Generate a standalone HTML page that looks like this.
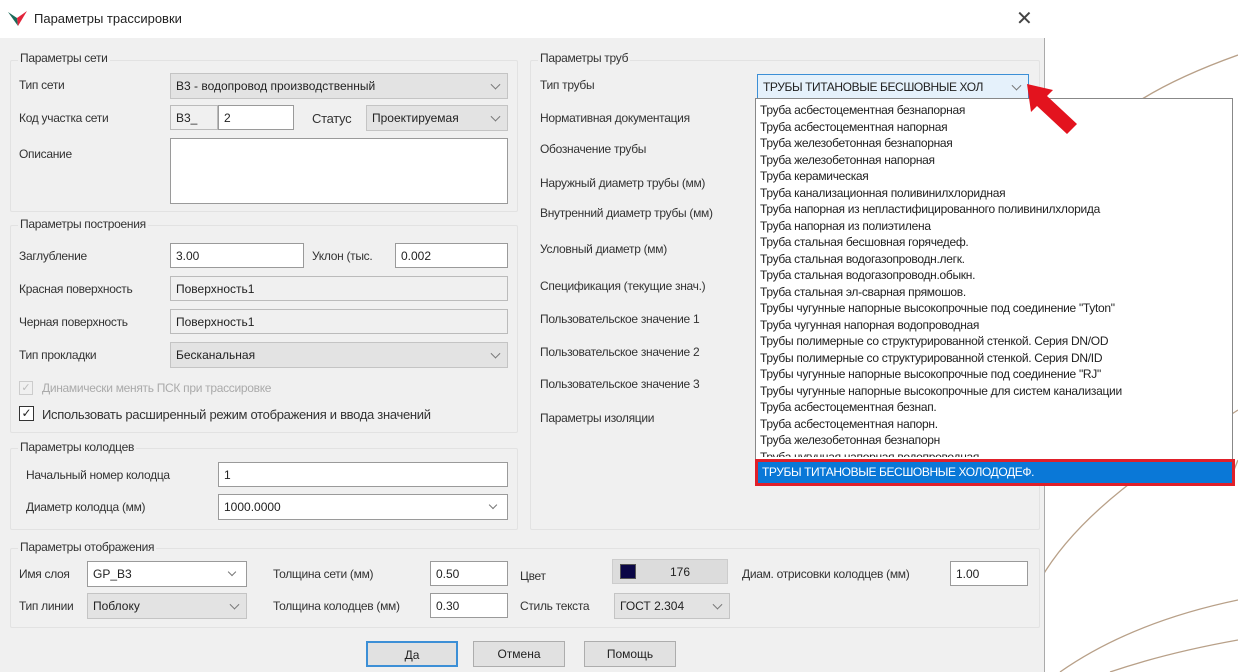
<!DOCTYPE html><html><head><meta charset="utf-8"><style>
*{box-sizing:border-box;margin:0;padding:0}
body{width:1238px;height:672px;overflow:hidden;background:#fff;font-family:"Liberation Sans","DejaVu Sans",sans-serif;font-size:12px;color:#222;position:relative}
.a{position:absolute;white-space:nowrap}
.dlg{position:absolute;left:0;top:0;width:1045px;height:672px;background:#f0f0f0;border-right:1px solid #aaa}
.title{position:absolute;left:0;top:0;width:1045px;height:38px;background:#fff}
.grp{position:absolute;border:1px solid #e2e2e2;border-radius:2px}
.lb{position:absolute;white-space:nowrap;font-size:12px;letter-spacing:-0.3px;color:#333}
.in{position:absolute;background:#fff;border:1px solid #9a9a9a;padding:0 5px;font-size:12px;white-space:nowrap;overflow:hidden;display:flex;align-items:center}
.ro{background:#f0f0f0;border-color:#bbb}
.cb{position:absolute;background:#e3e3e3;border:1px solid #c4c4c4;padding:0 5px;font-size:12px;white-space:nowrap;overflow:hidden;display:flex;align-items:center}
.cb:after{content:"";position:absolute;right:8px;top:50%;width:6px;height:6px;border-right:1px solid #777;border-bottom:1px solid #777;transform:translateY(-70%) rotate(45deg)}
.btn{position:absolute;background:#e1e1e1;border:1px solid #adadad;text-align:center;font-size:12px;line-height:24px}
.li{height:16.5px;line-height:16.5px;padding-left:4px;font-size:12px;letter-spacing:-0.3px;color:#222;white-space:nowrap}
</style></head><body>
<svg class="a" style="left:1040px;top:40px" width="198" height="632"><g fill="none" stroke="#b8a088" stroke-width="1.3">
<path d="M20 160 C40 90 100 50 198 15"/>
<path d="M0 540 C40 470 120 420 198 370"/>
<path d="M20 632 C80 590 150 570 198 560"/>
<path d="M70 632 C120 615 170 605 198 600"/>
<path d="M190 440 L198 420"/></g></svg>
<div class="dlg"></div>
<div class="title"></div>
<svg class="a" style="left:8px;top:10px" width="20" height="18"><path d="M0 2 L10 16 L9 8 Z" fill="#1b6b5a"/><path d="M9 8 L10 16 L19 1 Z" fill="#e2243a"/></svg>
<div class="a" style="left:34px;top:11px;font-size:13px;color:#222">Параметры трассировки</div>
<div class="a" style="left:1016px;top:6px;font-size:20px;color:#444">✕</div>

<div class="grp" style="left:10px;top:60px;width:508px;height:152px"></div>
<div class="lb" style="left:18px;top:51px;background:#f0f0f0;padding:0 2px">Параметры сети</div>
<div class="lb" style="left:19px;top:78px">Тип сети</div>
<div class="cb" style="left:170px;top:73px;width:338px;height:26px">В3 - водопровод производственный</div>
<div class="lb" style="left:19px;top:111px">Код участка сети</div>
<div class="in ro" style="left:170px;top:105px;width:48px;height:25px">В3_</div>
<div class="in" style="left:218px;top:105px;width:76px;height:25px">2</div>
<div class="lb" style="left:312px;top:111px;font-size:13px">Статус</div>
<div class="cb" style="left:366px;top:105px;width:142px;height:26px">Проектируемая</div>
<div class="lb" style="left:19px;top:147px">Описание</div>
<div class="in" style="left:170px;top:138px;width:338px;height:66px"></div>

<div class="grp" style="left:10px;top:225px;width:508px;height:208px"></div>
<div class="lb" style="left:18px;top:217px;background:#f0f0f0;padding:0 2px">Параметры построения</div>
<div class="lb" style="left:19px;top:249px">Заглубление</div>
<div class="in" style="left:170px;top:243px;width:134px;height:25px">3.00</div>
<div class="lb" style="left:312px;top:249px">Уклон (тыс.</div>
<div class="in" style="left:395px;top:243px;width:113px;height:25px">0.002</div>
<div class="lb" style="left:19px;top:282px">Красная поверхность</div>
<div class="in ro" style="left:170px;top:276px;width:338px;height:25px">Поверхность1</div>
<div class="lb" style="left:19px;top:315px">Черная поверхность</div>
<div class="in ro" style="left:170px;top:309px;width:338px;height:25px">Поверхность1</div>
<div class="lb" style="left:19px;top:348px">Тип прокладки</div>
<div class="cb" style="left:170px;top:342px;width:338px;height:26px">Бесканальная</div>
<div class="a" style="left:19px;top:381px;width:14px;height:14px;border:1px solid #ccc;color:#bbb;font-size:11px;line-height:12px;text-align:center">✓</div>
<div class="lb" style="left:42px;top:381px;color:#aaa">Динамически менять ПСК при трассировке</div>
<div class="a" style="left:19px;top:406px;width:15px;height:15px;border:1px solid #333;background:#fff;font-size:12px;line-height:13px;text-align:center">✓</div>
<div class="lb" style="left:42px;top:407px;font-size:13px">Использовать расширенный режим отображения и ввода значений</div>

<div class="grp" style="left:10px;top:448px;width:508px;height:82px"></div>
<div class="lb" style="left:18px;top:440px;background:#f0f0f0;padding:0 2px">Параметры колодцев</div>
<div class="lb" style="left:26px;top:468px">Начальный номер колодца</div>
<div class="in" style="left:218px;top:462px;width:290px;height:25px">1</div>
<div class="lb" style="left:26px;top:500px">Диаметр колодца (мм)</div>
<div class="in" style="left:218px;top:494px;width:290px;height:26px">1000.0000</div>
<div class="a" style="left:490px;top:502px;width:6px;height:6px;border-right:1px solid #777;border-bottom:1px solid #777;transform:rotate(45deg)"></div>

<div class="grp" style="left:530px;top:60px;width:510px;height:470px"></div>
<div class="lb" style="left:538px;top:51px;background:#f0f0f0;padding:0 2px">Параметры труб</div>
<div class="lb" style="left:540px;top:78px">Тип трубы</div>
<div class="lb" style="left:540px;top:111px">Нормативная документация</div>
<div class="lb" style="left:540px;top:142px">Обозначение трубы</div>
<div class="lb" style="left:540px;top:176px">Наружный диаметр трубы (мм)</div>
<div class="lb" style="left:540px;top:206px">Внутренний диаметр трубы (мм)</div>
<div class="lb" style="left:540px;top:242px">Условный диаметр (мм)</div>
<div class="lb" style="left:540px;top:279px">Спецификация (текущие знач.)</div>
<div class="lb" style="left:540px;top:312px">Пользовательское значение 1</div>
<div class="lb" style="left:540px;top:345px">Пользовательское значение 2</div>
<div class="lb" style="left:540px;top:377px">Пользовательское значение 3</div>
<div class="lb" style="left:540px;top:411px">Параметры изоляции</div>
<div class="cb" style="left:757px;top:74px;width:272px;height:25px;border-color:#3c8fd6;background:#e5f1fb;letter-spacing:-0.4px">ТРУБЫ ТИТАНОВЫЕ БЕСШОВНЫЕ ХОЛ</div>

<div class="grp" style="left:10px;top:548px;width:1030px;height:80px"></div>
<div class="lb" style="left:18px;top:540px;background:#f0f0f0;padding:0 2px">Параметры отображения</div>
<div class="lb" style="left:19px;top:567px">Имя слоя</div>
<div class="in" style="left:87px;top:561px;width:160px;height:26px">GP_B3</div>
<div class="a" style="left:229px;top:569px;width:6px;height:6px;border-right:1px solid #777;border-bottom:1px solid #777;transform:rotate(45deg)"></div>
<div class="lb" style="left:19px;top:599px">Тип линии</div>
<div class="cb" style="left:87px;top:593px;width:160px;height:26px">Поблоку</div>
<div class="lb" style="left:273px;top:567px">Толщина сети (мм)</div>
<div class="in" style="left:430px;top:561px;width:78px;height:25px">0.50</div>
<div class="lb" style="left:273px;top:599px">Толщина колодцев (мм)</div>
<div class="in" style="left:430px;top:593px;width:78px;height:25px">0.30</div>
<div class="lb" style="left:520px;top:569px">Цвет</div>
<div class="a" style="left:612px;top:559px;width:116px;height:25px;background:#dcdcdc;border:1px solid #ccc"></div>
<div class="a" style="left:620px;top:564px;width:16px;height:15px;background:#0a0646;border:1px solid #555"></div>
<div class="a" style="left:670px;top:565px;font-size:12px">176</div>
<div class="lb" style="left:520px;top:599px">Стиль текста</div>
<div class="cb" style="left:614px;top:593px;width:116px;height:26px">ГОСТ 2.304</div>
<div class="lb" style="left:742px;top:567px">Диам. отрисовки колодцев (мм)</div>
<div class="in" style="left:950px;top:561px;width:78px;height:25px">1.00</div>

<div class="btn" style="left:366px;top:641px;width:92px;height:26px;border:2px solid #3c8fd6">Да</div>
<div class="btn" style="left:473px;top:641px;width:92px;height:26px">Отмена</div>
<div class="btn" style="left:584px;top:641px;width:92px;height:26px">Помощь</div>

<div class="a" style="left:755px;top:98px;width:478px;height:388px;background:#fff;border:1px solid #888;padding-top:3px">
<div class="li">Труба асбестоцементная безнапорная</div>
<div class="li">Труба асбестоцементная напорная</div>
<div class="li">Труба железобетонная безнапорная</div>
<div class="li">Труба железобетонная напорная</div>
<div class="li">Труба керамическая</div>
<div class="li">Труба канализационная поливинилхлоридная</div>
<div class="li">Труба напорная из непластифицированного поливинилхлорида</div>
<div class="li">Труба напорная из полиэтилена</div>
<div class="li">Труба стальная бесшовная горячедеф.</div>
<div class="li">Труба стальная водогазопроводн.легк.</div>
<div class="li">Труба стальная водогазопроводн.обыкн.</div>
<div class="li">Труба стальная эл-сварная прямошов.</div>
<div class="li">Трубы чугунные напорные высокопрочные под соединение "Tyton"</div>
<div class="li">Труба чугунная напорная водопроводная</div>
<div class="li">Трубы полимерные со структурированной стенкой. Серия DN/OD</div>
<div class="li">Трубы полимерные со структурированной стенкой. Серия DN/ID</div>
<div class="li">Трубы чугунные напорные высокопрочные под соединение "RJ"</div>
<div class="li">Трубы чугунные напорные высокопрочные для систем канализации</div>
<div class="li">Труба асбестоцементная безнап.</div>
<div class="li">Труба асбестоцементная напорн.</div>
<div class="li">Труба железобетонная безнапорн</div>
<div class="li" style="height:8px;overflow:hidden">Труба чугунная напорная водопроводная</div>
</div>
<div class="a" style="left:755px;top:459px;width:480px;height:27px;border:3px solid #e0202a;background:#0a78d7;color:#fff;font-size:12px;line-height:21px;padding-left:4px;letter-spacing:-0.4px">ТРУБЫ ТИТАНОВЫЕ БЕСШОВНЫЕ ХОЛОДОДЕФ.</div>
<svg class="a" style="left:1015px;top:80px" width="70" height="60"><path d="M12 4 L38 10 L32 16 L62 44 L52 54 L22 26 L16 32 Z" fill="#e3131e"/></svg>
</body></html>
